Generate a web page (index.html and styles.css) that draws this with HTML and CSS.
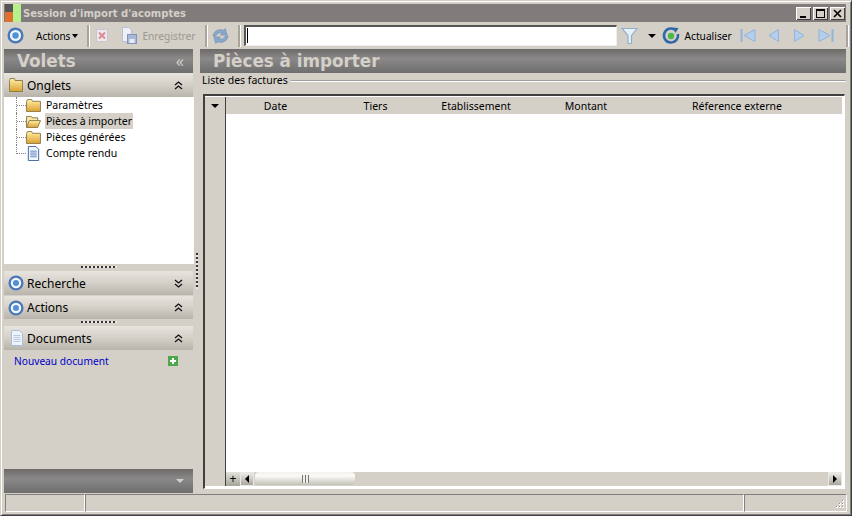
FILE: index.html
```html
<!DOCTYPE html>
<html lang="fr">
<head>
<meta charset="utf-8">
<title>Session d'import d'acomptes</title>
<link rel="stylesheet" href="styles.css">
</head>
<body>
<svg class="defs" width="0" height="0" aria-hidden="true">
  <defs>
    <linearGradient id="fold" x1="0" y1="0" x2="0" y2="1"><stop offset="0" stop-color="#fff0a8"/><stop offset="1" stop-color="#dca030"/></linearGradient>
    <symbol id="target" viewBox="0 0 18 18">
      <circle cx="9" cy="9" r="7.200" fill="#f4f6fa" stroke="#4a78b8" stroke-width="2.600"/>
      <circle cx="9" cy="9" r="3.400" fill="#5090d8"/>
    </symbol>
    <symbol id="folder" viewBox="0 0 16 14">
      <path d="M.5 2.500 L1.500 .5 H6 L7 2.500 H15.500 V13.500 H.5 Z" fill="url(#fold)" stroke="#8a7a4a"/>
    </symbol>
    <symbol id="folder-open" viewBox="0 0 16 14">
      <path d="M.5 13.500 V1.500 H5.500 L6.500 3 H12.500 V6" fill="#f6e6a8" stroke="#8a7a4a"/>
      <path d="M.5 13.500 L3.500 6 H15.500 L12.500 13.500 Z" fill="url(#fold)" stroke="#8a7a4a"/>
    </symbol>
    <symbol id="doc" viewBox="0 0 14 16">
      <path d="M1.500 .5 H9.500 L12.500 3.500 V15.500 H1.500 Z" fill="#f2f6fd" stroke="#3d5f9e"/>
      <path d="M3.500 5.500 H10.500 M3.500 7.500 H10.500 M3.500 9.500 H10.500 M3.500 11.500 H10.500" stroke="#5a80c0"/>
    </symbol>
    <symbol id="doc-pale" viewBox="0 0 14 16">
      <path d="M1.500 .5 H9.500 L12.500 3.500 V15.500 H1.500 Z" fill="#eef2fa" stroke="#a8bcdc"/>
      <path d="M3.500 5.500 H10.500 M3.500 7.500 H10.500 M3.500 9.500 H10.500 M3.500 11.500 H10.500" stroke="#b8c8e4"/>
    </symbol>
    <symbol id="chev-up" viewBox="0 0 9 9">
      <path d="M1 4 L4.500 1 L8 4 M1 8 L4.500 5 L8 8" fill="none" stroke="#111" stroke-width="1.300"/>
    </symbol>
    <symbol id="chev-down" viewBox="0 0 9 9">
      <path d="M1 1 L4.500 4 L8 1 M1 5 L4.500 8 L8 5" fill="none" stroke="#111" stroke-width="1.300"/>
    </symbol>
    <symbol id="sync" viewBox="0 0 18 18">
      <path d="M1 9 C2 3 8 1 12 3 L14 1 L16 8 L9 8 L11 6 C8 5 5 6 4 9 Z" fill="#86a8d0" stroke="#6a88a8" stroke-width=".6"/>
      <path d="M17 9 C16 15 10 17 6 15 L4 17 L2 10 L9 10 L7 12 C10 13 13 12 14 9 Z" fill="#86a8d0" stroke="#6a88a8" stroke-width=".6"/>
    </symbol>
  </defs>
</svg>

<div class="window">
  <header class="titlebar">
    <svg class="app-logo" width="16" height="18" viewBox="0 0 16 18" aria-hidden="true">
      <rect x="0" y="0" width="8" height="8" fill="#555"/><rect x="8" y="0" width="8" height="18" fill="#b6f08a"/><rect x="0" y="8" width="8" height="10" fill="#e07030"/>
    </svg>
    <span class="title-text">Session d'import d'acomptes</span>
    <div class="win-buttons">
      <button class="win-btn"><svg width="13" height="11" viewBox="0 0 13 11"><rect x="3" y="8" width="6" height="2" fill="#000"/></svg></button>
      <button class="win-btn"><svg width="13" height="11" viewBox="0 0 13 11"><rect x="2.500" y="1.500" width="8" height="8" fill="none" stroke="#000"/><rect x="2" y="1" width="9" height="2" fill="#000"/></svg></button>
      <button class="win-btn"><svg width="13" height="11" viewBox="0 0 13 11"><path d="M3 2 L10 9 M10 2 L3 9" stroke="#000" stroke-width="1.600"/></svg></button>
    </div>
  </header>

  <div class="toolbar">
    <svg class="tb-logo" width="17" height="17" aria-hidden="true"><use href="#target"/></svg>
    <span class="tb-menu">Actions</span><span class="caret tb-caret"></span>
    <span class="tb-sep tb-sep-a"></span>
    <svg class="tb-del" width="14" height="15" viewBox="0 0 14 15" aria-hidden="true"><rect x="1.500" y="1.500" width="11" height="12" fill="#f0e8ea" stroke="#c8c4d0"/><path d="M4 4.500 L10 10.500 M10 4.500 L4 10.500" stroke="#d88a90" stroke-width="1.800"/></svg>
    <svg class="tb-save" width="16" height="17" viewBox="0 0 16 17" aria-hidden="true"><path d="M1.500 .5 H8 L10.500 3 V14.500 H1.500 Z" fill="#eef0f6" stroke="#b8c0d4"/><rect x="6.500" y="7.500" width="9" height="9" fill="#a8b8d8" stroke="#8494b8"/><rect x="8.500" y="12" width="5" height="4" fill="#e8ecf4"/></svg>
    <span class="tb-disabled">Enregistrer</span>
    <span class="tb-sep tb-sep-b"></span>
    <svg class="tb-sync" width="17" height="18" aria-hidden="true"><use href="#sync"/></svg>
    <span class="tb-sep tb-sep-c"></span>
    <div class="search"><span class="search-caret"></span></div>
    <svg class="tb-filter" width="17" height="18" viewBox="0 0 17 18" aria-hidden="true"><path d="M1 1.500 H16 L10.500 8.500 V16.500 H7 V8.500 Z" fill="#e8f0f8" stroke="#8fb0cc" stroke-width="1.200"/></svg>
    <span class="caret tb-caret-b"></span>
    <svg class="tb-refresh" width="18" height="18" viewBox="0 0 18 18" aria-hidden="true"><path d="M13 2.800 A7 7 0 1 0 15.800 7" fill="none" stroke="#3068a8" stroke-width="2.600"/><path d="M10.500 .5 L16.500 1 L13.500 6 Z" fill="#3068a8"/><circle cx="9" cy="9" r="3.200" fill="#4cb848"/></svg>
    <span class="tb-label">Actualiser</span>
    <svg class="tb-nav tb-nav-first" width="16" height="15" viewBox="0 0 16 15" aria-hidden="true"><path d="M1.500 1 V14" stroke="#90b4dc" stroke-width="2"/><path d="M15 1.500 V13.500 L4 7.500 Z" fill="#b4cfec" stroke="#90b4dc"/></svg>
    <svg class="tb-nav tb-nav-prev" width="11" height="15" viewBox="0 0 11 15" aria-hidden="true"><path d="M10.500 1.500 V13.500 L1 7.500 Z" fill="#b4cfec" stroke="#90b4dc"/></svg>
    <svg class="tb-nav tb-nav-next" width="11" height="15" viewBox="0 0 11 15" aria-hidden="true"><path d="M.5 1.500 V13.500 L10 7.500 Z" fill="#b4cfec" stroke="#90b4dc"/></svg>
    <svg class="tb-nav tb-nav-last" width="16" height="15" viewBox="0 0 16 15" aria-hidden="true"><path d="M14.500 1 V14" stroke="#90b4dc" stroke-width="2"/><path d="M1 1.500 V13.500 L12 7.500 Z" fill="#b4cfec" stroke="#90b4dc"/></svg>
    <span class="tb-sep tb-sep-d"></span>
  </div>

  <div class="main">
    <aside class="sidebar">
      <div class="banner banner-side">
        <h2 class="banner-title side-title">Volets</h2>
        <span class="collapse">«</span>
      </div>

      <div class="section-head">
        <svg class="sec-icon sec-icon-small" width="14" height="14" viewBox="0 0 16 14" preserveAspectRatio="none" aria-hidden="true"><path d="M.5 2.500 L1.500 .5 H6 L7 2.500 H15.500 V13.500 H.5 Z" fill="url(#fold)" stroke="#8a7a4a"/></svg>
        <span class="sec-label">Onglets</span>
        <svg class="sec-chev" width="9" height="9" aria-hidden="true"><use href="#chev-up"/></svg>
      </div>
      <div class="tree">
        <div class="tree-row"><span class="conn"></span><svg class="tree-icon" width="15" height="13" aria-hidden="true"><use href="#folder"/></svg><span class="tree-label">Paramètres</span></div>
        <div class="tree-row"><span class="conn"></span><svg class="tree-icon" width="15" height="13" aria-hidden="true"><use href="#folder-open"/></svg><span class="tree-label selected">Pièces à importer</span></div>
        <div class="tree-row"><span class="conn"></span><svg class="tree-icon" width="15" height="13" aria-hidden="true"><use href="#folder"/></svg><span class="tree-label">Pièces générées</span></div>
        <div class="tree-row tree-last"><span class="conn"></span><svg class="tree-icon" width="15" height="15" aria-hidden="true"><use href="#doc"/></svg><span class="tree-label">Compte rendu</span></div>
      </div>
      <div class="grip"></div>

      <div class="section-head">
        <svg class="sec-icon sec-icon-target" width="16" height="16" aria-hidden="true"><use href="#target"/></svg>
        <span class="sec-label">Recherche</span>
        <svg class="sec-chev" width="9" height="9" aria-hidden="true"><use href="#chev-down"/></svg>
      </div>
      <div class="section-head section-actions">
        <svg class="sec-icon sec-icon-target" width="16" height="16" aria-hidden="true"><use href="#target"/></svg>
        <span class="sec-label">Actions</span>
        <svg class="sec-chev" width="9" height="9" aria-hidden="true"><use href="#chev-up"/></svg>
      </div>
      <div class="grip"></div>

      <div class="section-head">
        <svg class="sec-icon" width="16" height="16" aria-hidden="true"><use href="#doc-pale"/></svg>
        <span class="sec-label">Documents</span>
        <svg class="sec-chev" width="9" height="9" aria-hidden="true"><use href="#chev-up"/></svg>
      </div>
      <div class="docs">
        <a class="doc-link">Nouveau document</a>
        <svg width="10" height="10" viewBox="0 0 10 10" aria-hidden="true"><rect width="10" height="10" fill="#4ca84c"/><path d="M5 2 V8 M2 5 H8" stroke="#fff" stroke-width="2"/></svg>
      </div>
      <div class="side-foot"><span class="foot-arrow"></span></div>
    </aside>

    <div class="vsplit"><span class="vgrip"></span></div>

    <section class="content">
      <div class="banner">
        <h1 class="banner-title">Pièces à importer</h1>
      </div>
      <div class="group-label"><span>Liste des factures</span><span class="group-line"></span></div>
      <div class="grid">
        <div class="grid-rail">
          <div class="rail-top"><span class="caret"></span></div>
        </div>
        <div class="grid-main">
          <div class="grid-head">
            <span>Date</span><span>Tiers</span><span>Etablissement</span><span>Montant</span><span>Réference externe</span>
          </div>
          <div class="grid-body"></div>
          <div class="hscroll">
            <span class="rail-add">+</span>
            <span class="sb-btn"><span class="arrow-l"></span></span>
            <div class="sb-thumb"><span class="thumb-lines"></span></div>
            <span class="sb-fill"></span>
            <span class="sb-btn"><span class="arrow-r"></span></span>
          </div>
        </div>
      </div>
    </section>
  </div>

  <footer class="statusbar">
    <span class="st-cell st-a"></span>
    <span class="st-cell st-b"></span>
    <span class="st-cell st-c">
      <svg width="11" height="11" viewBox="0 0 11 11" aria-hidden="true"><path d="M8 1h2v2H8zM5 4h2v2H5zM8 4h2v2H8zM2 7h2v2H2zM5 7h2v2H5zM8 7h2v2H8z" fill="#fff"/><path d="M8 1h1v1H8zM5 4h1v1H5zM8 4h1v1H8zM2 7h1v1H2zM5 7h1v1H5zM8 7h1v1H8z" fill="#8a8a8a"/></svg>
    </span>
  </footer>
</div>
</body>
</html>
```
FILE: styles.css
```css
* { box-sizing: border-box; }
html, body { margin: 0; padding: 0; height: 100%; }
body { background: #d4d0c8; font-family: "Noto Sans", "DejaVu Sans", sans-serif; font-size: 10.5px; color: #000; overflow: hidden; }
.defs { position: absolute; }
h1, h2 { margin: 0; }

.window { width: 852px; height: 516px; display: flex; flex-direction: column; border: 1px solid #d4d0c8; border-right-color: #404040; border-bottom-color: #404040; padding: 3px 4px 2px 3px; background: #d4d0c8; box-shadow: inset 1px 1px 0 #fff, inset -1px -1px 0 #808080; }

.titlebar { height: 18px; flex: none; background: #807c7c; display: flex; align-items: center; padding: 0 1px 0 1px; margin-right: 1px; }
.app-logo { flex: none; }
.title-text { margin-left: 2px; color: #d4d0c8; font-family: "DejaVu Sans", sans-serif; font-weight: bold; font-size: 10px; }
.win-buttons { margin-left: auto; display: flex; gap: 2px; }
.win-btn { width: 15px; height: 13px; padding: 0; border: 0; background: #d4d0c8; box-shadow: inset 1px 1px 0 #fff, inset -1px -1px 0 #404040; display: flex; align-items: center; justify-content: center; }

.toolbar { height: 27px; flex: none; display: flex; align-items: center; }
.tb-logo { margin-left: 3px; flex: none; }
.tb-menu { margin-left: 12px; font-size: 10px; }
.caret { display: inline-block; width: 0; height: 0; border-left: 4px solid transparent; border-right: 4px solid transparent; border-top: 4px solid #000; }
.tb-caret { margin-left: 2px; border-left-width: 3.500px; border-right-width: 3.500px; }
.tb-sep { width: 2px; height: 22px; flex: none; background: #a8a49c; box-shadow: 1px 0 0 #fff; }
.tb-sep-a { margin-left: 9px; }
.tb-del { margin-left: 6px; flex: none; }
.tb-save { margin-left: 12px; flex: none; }
.tb-disabled { margin-left: 5px; color: #9c9890; font-size: 10.200px; }
.tb-sep-b { margin-left: 9px; }
.tb-sync { margin-left: 5px; flex: none; }
.tb-sep-c { margin-left: 9px; }
.search { margin-left: 4px; width: 373px; height: 21px; flex: none; background: #fff; border: 2px solid #555; border-right: 1px solid #eee; border-bottom: 1px solid #eee; padding: 1px; display: flex; }
.search-caret { width: 1px; height: 15px; background: #000; }
.tb-filter { margin-left: 4px; flex: none; }
.tb-caret-b { margin-left: 10px; }
.tb-refresh { margin-left: 6px; flex: none; }
.tb-label { margin-left: 5px; font-size: 10.200px; }
.tb-nav { flex: none; }
.tb-nav-first { margin-left: 8px; }
.tb-nav-prev { margin-left: 12px; }
.tb-nav-next { margin-left: 15px; }
.tb-nav-last { margin-left: 13px; }
.tb-sep-d { margin-left: 12px; }

.main { flex: 1; min-height: 0; display: flex; }

.sidebar { width: 189px; flex: none; display: flex; flex-direction: column; }
.banner { height: 24px; flex: none; background: linear-gradient(#6e6a6a, #8a8888 40%, #6e6e6e); display: flex; align-items: center; }
.banner-title { font-family: "DejaVu Sans", sans-serif; font-weight: bold; font-size: 16.800px; color: #d4d0c8; line-height: 24px; padding-left: 13px; }
.side-title { flex: 1; }
.collapse { color: #d4d0c8; font-size: 16px; line-height: 20px; margin-right: 9px; }

.section-head { height: 24px; flex: none; display: flex; align-items: center; background: linear-gradient(#e8e4de, #d4d0c8 50%, #b8b4ac); padding: 0 10px 0 5px; }
.section-actions { height: 23px; margin-top: 1px; }
.sec-icon { flex: none; }
.sec-icon-small { margin-right: 2px; }
.sec-icon-target { margin-left: -1px; margin-right: 1px; }
.sec-label { margin-left: 2px; font-size: 12px; color: #000; }
.sec-chev { margin-left: auto; flex: none; }

.tree { height: 167px; flex: none; background: #fff; padding-left: 12px; margin-right: -1px; }
.tree-row { height: 16px; display: flex; align-items: center; position: relative; }
.conn { width: 10px; height: 16px; flex: none; border-left: 1px dotted #808080; position: relative; }
.conn::after { content: ""; position: absolute; left: 0; right: 0; top: 8px; border-top: 1px dotted #808080; }
.tree-last .conn { height: 9px; align-self: flex-start; }
.tree-icon { flex: none; }
.tree-label { margin-left: 4px; padding: 1px; line-height: 14px; }
.selected { background: #d4d0c8; }

.grip { height: 7px; flex: none; background: #d4d0c8; display: flex; justify-content: center; align-items: center; }
.grip::before { content: ""; width: 36px; height: 2px; margin-top: -2px; background: repeating-linear-gradient(90deg, #333 0 2px, #e8e8e8 2px 4px); }
.docs { height: 22px; flex: none; padding: 0 15px 0 10px; display: flex; align-items: center; justify-content: space-between; }
.doc-link { color: #0000c8; font-size: 10.200px; }
.side-foot { margin-top: auto; height: 24px; flex: none; background: linear-gradient(#6e6a6a, #8a8888 40%, #6e6e6e); display: flex; align-items: center; justify-content: flex-end; padding-right: 9px; }
.foot-arrow { width: 0; height: 0; border-left: 4px solid transparent; border-right: 4px solid transparent; border-top: 4px solid #d4d0c8; }

.vsplit { width: 7px; flex: none; display: flex; align-items: center; justify-content: center; }
.vgrip { width: 2px; height: 36px; background: repeating-linear-gradient(#333 0 2px, #e8e8e8 2px 4px); }

.content { width: 646px; flex: none; display: flex; flex-direction: column; }
.group-label { height: 21px; flex: none; display: flex; padding-left: 2px; align-items: flex-start; line-height: 14px; }
.group-line { flex: 1; margin: 7px 0 0 3px; height: 2px; border-top: 1px solid #a0a0a0; border-bottom: 1px solid #fff; }

.grid { height: 395px; flex: none; margin-left: 3px; margin-right: 1px; display: flex; border: 2px solid #404040; border-right: 1px solid #fff; border-bottom: 1px solid #fff; background: #fff; padding: 1px 2px 2px 0; }
.grid-rail { width: 21px; flex: none; display: flex; flex-direction: column; background: #d4d0c8; border-right: 1px solid #404040; }
.rail-top { height: 17px; flex: none; display: flex; align-items: center; justify-content: center; }
.rail-add { width: 14px; flex: none; text-align: center; line-height: 13px; font-size: 12px; background: linear-gradient(#e4e2dc, #a8a49c); }
.grid-main { flex: 1; min-width: 0; display: flex; flex-direction: column; }
.grid-head { height: 17px; flex: none; background: #d4d0c8; display: grid; grid-template-columns: 99px 101px 100px 120px 182px; align-items: center; text-align: center; }
.grid-body { flex: 1; background: #fff; }
.hscroll { height: 14px; flex: none; display: flex; background: #d4d0c8; }
.sb-btn { width: 14px; flex: none; background: linear-gradient(#ecebe6, #aaa69e); display: flex; align-items: center; justify-content: center; border: 1px solid #e8e8e4; }
.arrow-l { width: 0; height: 0; border-top: 4px solid transparent; border-bottom: 4px solid transparent; border-right: 4px solid #000; }
.arrow-r { width: 0; height: 0; border-top: 4px solid transparent; border-bottom: 4px solid transparent; border-left: 4px solid #000; }
.sb-thumb { width: 100px; flex: none; height: 13px; margin-left: 1px; border-radius: 4px; background: linear-gradient(#f2f1ec, #fbfaf6 30%, #c4c0b8); display: flex; align-items: center; justify-content: center; }
.thumb-lines { width: 7px; height: 8px; background: repeating-linear-gradient(90deg, #777 0 1px, #eee 1px 3px); }
.sb-fill { flex: 1; }

.statusbar { height: 20px; flex: none; display: flex; margin: 0 0 0 1px; padding: 1px 0; }
.st-cell { display: flex; align-items: flex-end; justify-content: flex-end; border: 1px solid #fff; border-top-color: #808080; border-left-color: #808080; }
.st-a { width: 80px; }
.st-b { width: 659px; }
.st-c { width: 103px; padding: 0 1px 1px 0; }
```
